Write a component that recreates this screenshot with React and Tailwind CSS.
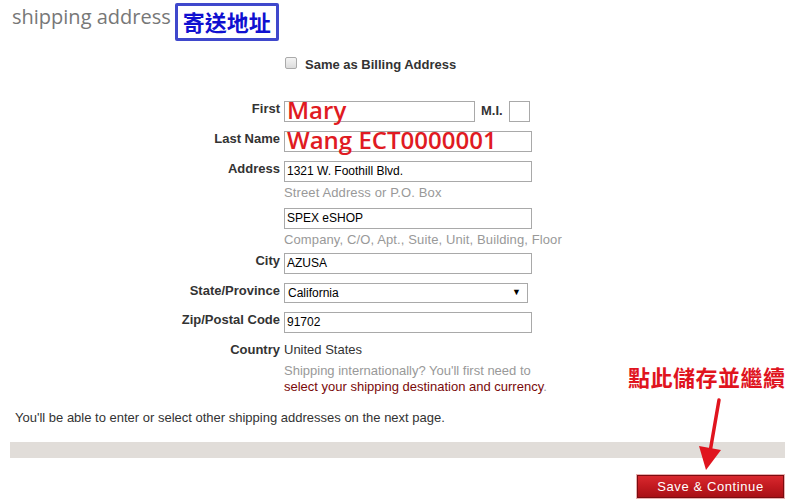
import React from 'react';

const Label = ({ children }) => (
  <div className="text-right text-[13px] font-bold text-[#333] pr-[4px] leading-[16px]">{children}</div>
);

const Box = ({ children, w = 'w-[248px]', className = '' }) => (
  <div className={`${w} h-[21px] border border-[#a9a9a9] bg-white px-[2px] text-[12px] leading-[19px] text-black ${className}`}>
    {children}
  </div>
);

const Hint = ({ children, last }) => (
  <div className={`text-[13px] text-[#999] leading-[16px] tracking-[0.12px] mt-[3px] ${last ? 'mb-[-4px]' : 'mb-[7px]'}`}>{children}</div>
);

const redName = 'absolute left-[2px] top-[-3px] text-[24px] font-semibold text-[#e01a22] leading-[21px] whitespace-nowrap';

const App = () => {
  return (
    <div className="relative w-[796px] h-[504px] bg-white overflow-hidden" style={{ fontFamily: '"Liberation Sans", Arial, sans-serif' }}>
      {/* heading */}
      <div className="flex items-start pl-[12px] pt-[3px]">
        <span className="text-[20px] text-[#777] leading-[28px]" style={{ fontFamily: '"Open Sans", "Noto Sans", sans-serif' }}>shipping address</span>
        <span
          className="ml-[4px] h-[38px] px-[5px] border-[3px] border-[#3f48cc] rounded-[2px] text-[22px] font-bold text-[#1010d0] leading-[30px]"
          style={{ fontFamily: '"Noto Sans CJK TC", "Noto Sans CJK SC", sans-serif' }}
        >
          寄送地址
        </span>
      </div>

      {/* same as billing */}
      <div className="flex items-center ml-[285px] mt-[11px]">
        <div className="w-[12px] h-[12px] rounded-[2px] border border-[#aaa] bg-gradient-to-b from-[#f4f4f4] to-[#dcdcdc]" />
        <span className="ml-[8px] text-[13px] font-bold text-[#333] pt-[3px]">Same as Billing Address</span>
      </div>

      {/* form */}
      <div className="grid grid-cols-[284px_1fr] mt-[26px] gap-y-[9px]">
        <Label>First</Label>
        <div className="flex items-start">
          <Box w="w-[191px]" className="relative">
            <span className={redName} style={{ fontFamily: '"Open Sans", sans-serif' }}>Mary</span>
          </Box>
          <span className="ml-[6px] text-[13px] font-bold text-[#333] pt-[2px] leading-[16px]">M.I.</span>
          <Box w="w-[21px]" className="ml-[6px]" />
        </div>

        <Label>Last Name</Label>
        <Box className="relative">
          <span className={redName} style={{ fontFamily: '"Open Sans", sans-serif' }}>Wang ECT0000001</span>
        </Box>

        <Label>Address</Label>
        <div>
          <Box>1321 W. Foothill Blvd.</Box>
          <Hint>Street Address or P.O. Box</Hint>
          <Box>SPEX eSHOP</Box>
          <Hint last>Company, C/O, Apt., Suite, Unit, Building, Floor</Hint>
        </div>

        <Label>City</Label>
        <Box>AZUSA</Box>

        <Label>State/Province</Label>
        <div className="w-[244px] h-[20px] border border-[#a9a9a9] bg-white flex items-center justify-between pl-[3px] pr-[6px] text-[12px] text-black">
          <span>California</span>
          <span className="text-[9px]">▼</span>
        </div>

        <Label>Zip/Postal Code</Label>
        <Box>91702</Box>

        <Label>Country</Label>
        <div>
          <div className="text-[13px] text-[#333] leading-[16px]">United States</div>
          <div className="text-[13px] text-[#999] leading-[16px] mt-[5px]">Shipping internationally? You'll first need to</div>
          <div className="text-[13px] leading-[16px]">
            <span className="text-[#7a0a0a]">select your shipping destination and currency</span>
            <span className="text-[#999]">.</span>
          </div>
        </div>
      </div>

      <div className="ml-[15px] mt-[15px] text-[13px] text-[#333] leading-[16px]">
        You'll be able to enter or select other shipping addresses on the next page.
      </div>

      <div className="ml-[10px] mr-[11px] mt-[16px] h-[16px] bg-[#e1ddd9]" />

      <div className="flex justify-end mr-[12px] mt-[17px]">
        <button className="w-[147px] h-[23px] border border-[#7a0c10] outline outline-1 outline-[#e8b0b0] bg-gradient-to-b from-[#d9282e] via-[#c21a20] to-[#a81016] text-white text-[13px] tracking-[0.6px] leading-[21px]">
          Save &amp; Continue
        </button>
      </div>

      {/* annotation */}
      <div
        className="absolute left-[628px] top-[362px] text-[22px] font-bold text-[#e0141e] leading-[28px] tracking-[0.5px]"
        style={{ fontFamily: '"Noto Sans CJK TC", "Noto Sans CJK SC", sans-serif' }}
      >
        點此儲存並繼續
      </div>
      <svg className="absolute left-[690px] top-[396px]" width="40" height="76" viewBox="0 0 40 76">
        <line x1="29" y1="4" x2="20" y2="56" stroke="#e0141e" strokeWidth="3.5" strokeLinecap="round" />
        <polygon points="9,50 31,54 16,74" fill="#e0141e" />
      </svg>
    </div>
  );
};

export default App;
